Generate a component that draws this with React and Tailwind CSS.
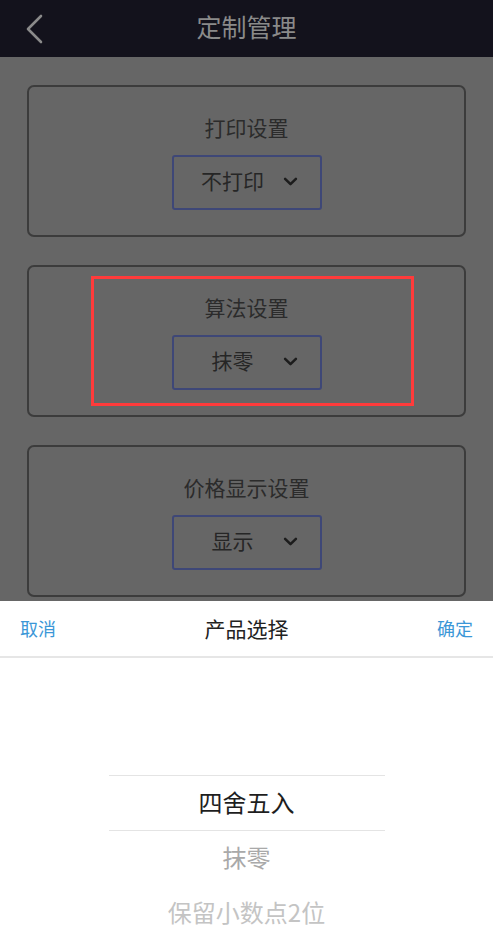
const font = { fontFamily: '"Noto Sans CJK SC", "Noto Sans", sans-serif' };

const Chevron = () => (
    <svg viewBox="0 0 16 10" className="w-[15px] h-[9px]" fill="none">
        <path d="M2 2 L8 8 L14 2" stroke="#1c1c1c" strokeWidth="2.8" strokeLinecap="round" strokeLinejoin="round" />
    </svg>
);

const SettingCard = ({ title, value, marked }) => (
    <div className="relative mx-[27px] h-[152px] rounded-[7px] border-2 border-[#3c3c3c] flex flex-col items-center">
        <div className="mt-[25px] h-[30px] leading-[30px] text-[21px] text-[#2b2b2b]">{title}</div>
        <div className="mt-[13px] w-[150px] h-[55px] rounded-[3px] border-2 border-[#3e4777] flex items-center pl-[9px] pb-[3px]">
            <div className="w-[100px] text-center text-[21px] text-[#262626]">{value}</div>
            <Chevron />
        </div>
        {marked && (
            <div className="absolute left-[62px] top-[9px] w-[323px] h-[130px] border-[3px] border-[#ff3b3b]" />
        )}
    </div>
);

const App = () => {
    return (
        <div className="w-[493px] h-[949px] flex flex-col bg-white overflow-hidden" style={font}>
            {/* nav bar */}
            <div className="h-[57px] bg-[#13121c] flex items-center justify-center relative pb-[3px]">
                <svg viewBox="0 0 20 30" className="absolute left-[24px] top-[14px] w-[20px] h-[30px]" fill="none">
                    <path d="M17 2 L4 15 L17 28" stroke="#8a8a8a" strokeWidth="2.6" strokeLinecap="round" strokeLinejoin="round" />
                </svg>
                <span className="text-[25px] text-[#8a8a8a]">定制管理</span>
            </div>

            {/* dimmed page */}
            <div className="h-[544px] bg-[#666666] pt-[28px] flex flex-col gap-[28px]">
                <SettingCard title="打印设置" value="不打印" />
                <SettingCard title="算法设置" value="抹零" marked />
                <SettingCard title="价格显示设置" value="显示" />
            </div>

            {/* bottom picker */}
            <div className="flex-1 bg-white flex flex-col">
                <div className="h-[57px] border-b-2 border-[#e6e6e6] flex items-center justify-between px-[20px]">
                    <span className="text-[18px] text-[#3b97d7]">取消</span>
                    <span className="text-[21px] text-[#222222]">产品选择</span>
                    <span className="text-[18px] text-[#3b97d7]">确定</span>
                </div>
                <div className="pt-[117px] flex flex-col items-center">
                    <div className="w-[276px] h-[56px] border-y border-[#e4e4e4] flex items-center justify-center pb-[3px] text-[24px] text-[#1e1e1e]">
                        四舍五入
                    </div>
                    <div className="h-[55px] flex items-center justify-center pb-[3px] text-[24px] text-[#a9a9a9]">抹零</div>
                    <div className="h-[55px] flex items-center justify-center pb-[3px] text-[24px] text-[#c4c4c4]">保留小数点2位</div>
                </div>
            </div>
        </div>
    );
};

export default App;
